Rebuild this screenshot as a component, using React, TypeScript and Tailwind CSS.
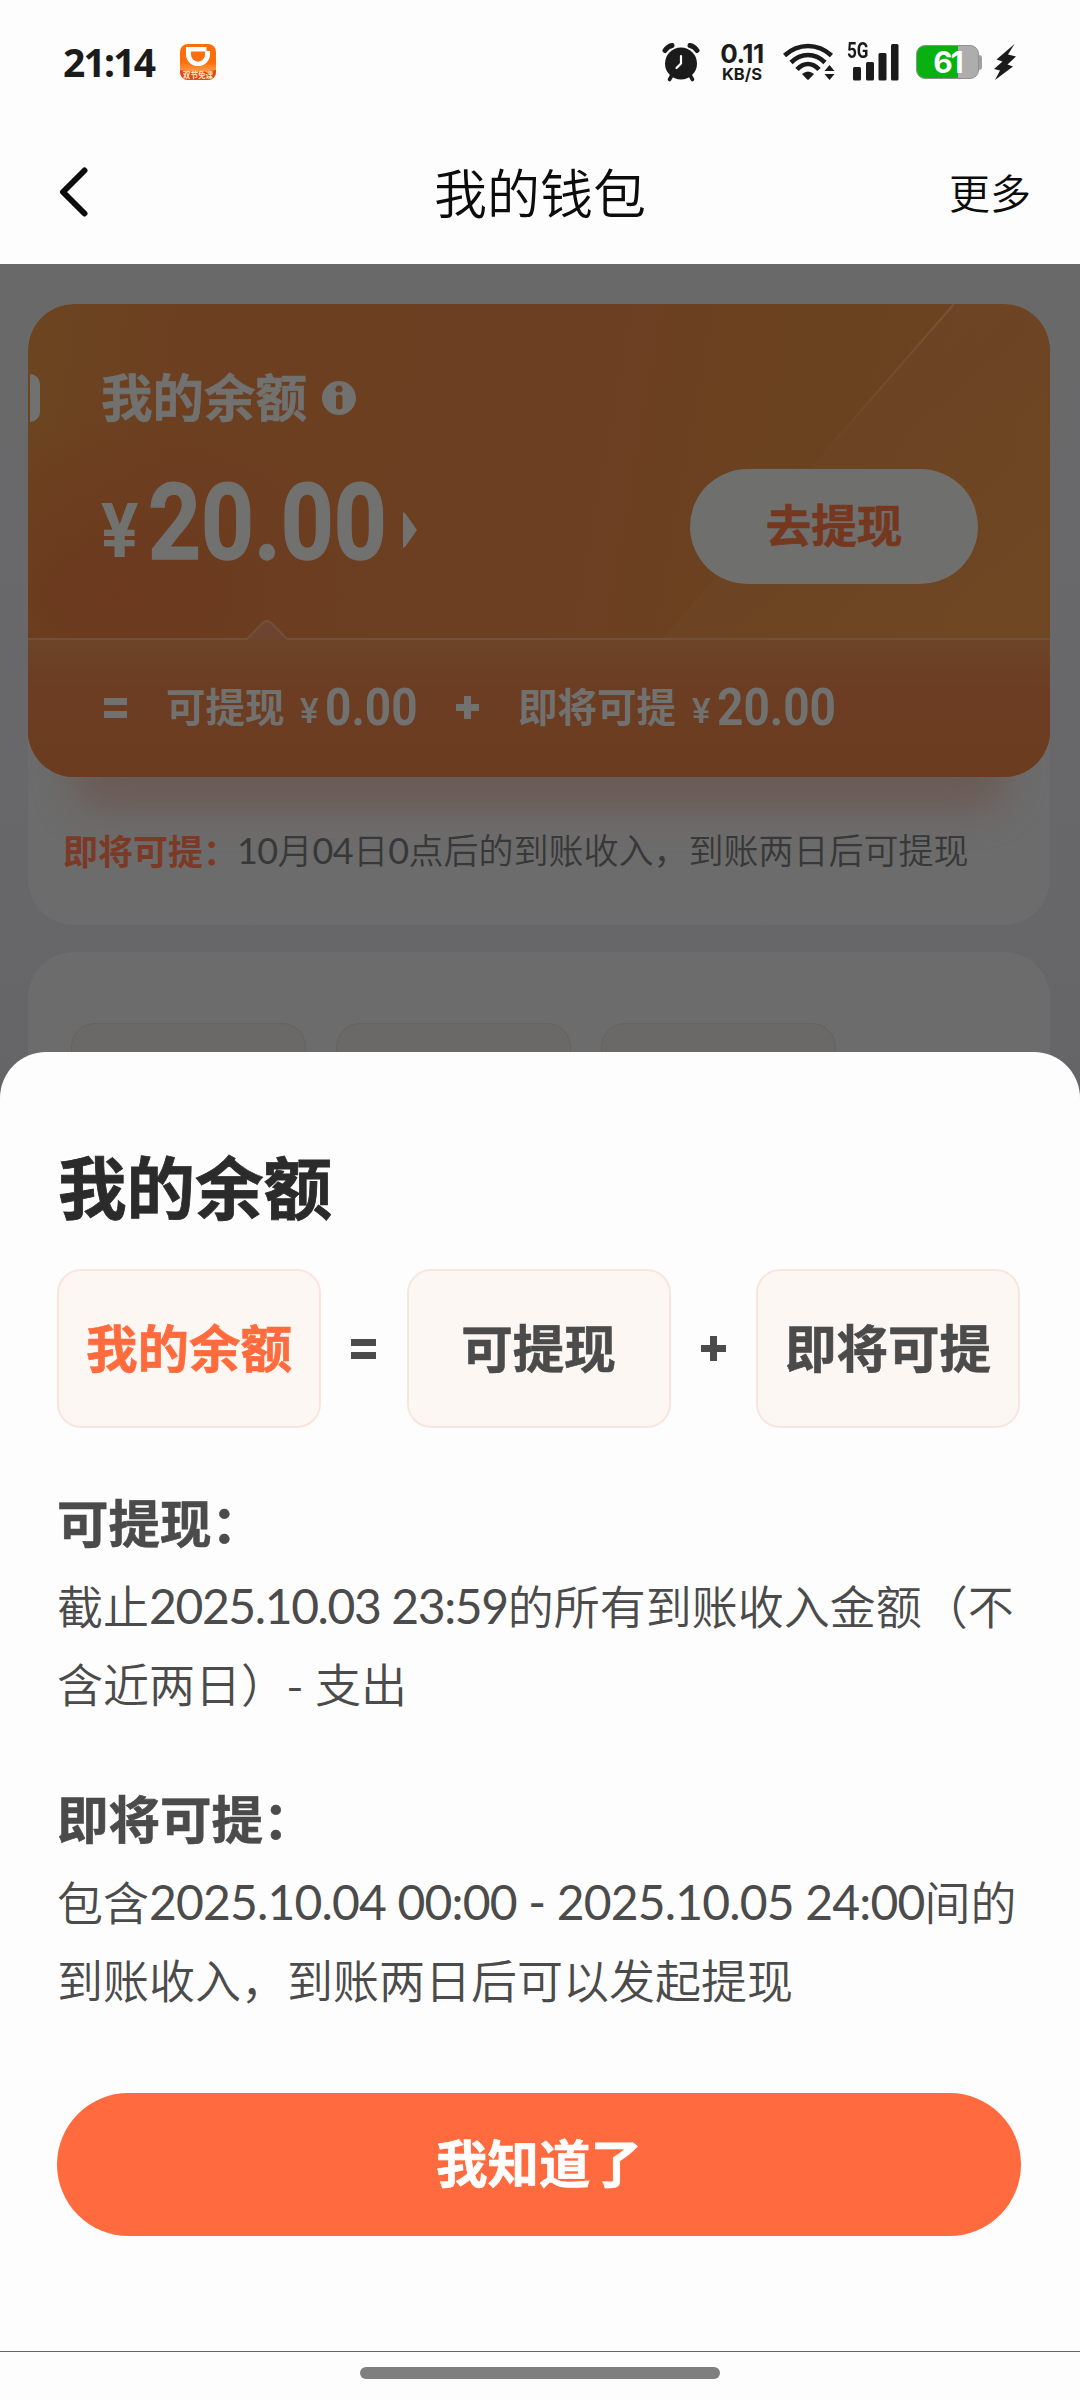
import type { ReactNode } from "react";

const CJK = "font-['Noto_Sans_CJK_SC',sans-serif]";

function AlarmIcon() {
  return (
    <svg width="38" height="39" viewBox="0 0 38 39" className="shrink-0">
      <path d="M3 7.500Q5.500 3.500 10 2.500" stroke="#1b1b1b" strokeWidth="5" strokeLinecap="round" fill="none" />
      <path d="M35 7.500Q32.500 3.500 28 2.500" stroke="#1b1b1b" strokeWidth="5" strokeLinecap="round" fill="none" />
      <circle cx="19" cy="20.500" r="16" fill="#1b1b1b" />
      <path d="M9.500 33L7.500 36.500M28.500 33L30.500 36.500" stroke="#1b1b1b" strokeWidth="3.600" strokeLinecap="round" />
      <path d="M19 13V20.500L14.500 25" stroke="#fff" strokeWidth="2.200" strokeLinecap="round" strokeLinejoin="round" fill="none" />
    </svg>
  );
}

function WifiIcon() {
  return (
    <svg width="52" height="38" viewBox="0 0 52 38" className="shrink-0">
      <g fill="none" stroke="#1b1b1b" strokeWidth="4.600">
        <path d="M1.500 12.500Q12 3 25 3T48.500 12.500" />
        <path d="M8 19.500Q15.500 12 25 12T42 19.500" />
        <path d="M14 26.500Q19 21 25 21T36 26.500" />
      </g>
      <path d="M19 31Q25 26 31 31L25.800 36.500Q25 37.200 24.200 36.500Z" fill="#1b1b1b" />
      <path d="M46.500 22L51.500 28H41.500ZM46.500 37L51.500 31H41.500Z" fill="#1b1b1b" />
    </svg>
  );
}

function SignalIcon() {
  return (
    <div className="relative h-[38px] w-[52px] shrink-0">
      <span className="absolute -top-[3px] left-0 origin-left scale-x-[0.78] font-['Roboto',sans-serif] text-[22px] leading-[22px] font-bold text-[#1b1b1b]">5G</span>
      <svg width="52" height="38" viewBox="0 0 52 38">
        <g fill="#1b1b1b">
          <rect x="6" y="24" width="8" height="13.500" rx="1.500" />
          <rect x="19" y="19" width="8" height="18.500" rx="1.500" />
          <rect x="31.500" y="10" width="8" height="27.500" rx="1.500" />
          <rect x="44" y="1" width="7.500" height="36.500" rx="1.500" />
        </g>
      </svg>
    </div>
  );
}

function Battery() {
  return (
    <div className="flex shrink-0 items-center">
      <div className="relative flex h-[34px] w-[63px] items-center justify-center overflow-hidden rounded-[9px] border border-[#8f8f8f] bg-[#adadad]">
        <div className="absolute inset-y-0 left-0 w-[41px] bg-[#08b010]" />
        <span className="relative font-['Inter',sans-serif] text-[30px] leading-none font-bold tracking-[-2px] text-white">61</span>
      </div>
      <div className="h-[15px] w-[3px] rounded-r-[3px] bg-[#a0a0a0]" />
    </div>
  );
}

function AppBadge() {
  return (
    <svg width="36" height="36" viewBox="0 0 36 36" className="shrink-0">
      <defs>
        <clipPath id="badge"><rect width="36" height="36" rx="8" /></clipPath>
        <linearGradient id="bg" x1="0" y1="0" x2="0" y2="1">
          <stop offset="0" stopColor="#f56f10" />
          <stop offset="0.5" stopColor="#ff6d0c" />
          <stop offset="0.75" stopColor="#fb9a45" />
        </linearGradient>
      </defs>
      <g clipPath="url(#badge)">
        <rect width="36" height="36" fill="url(#bg)" />
        <path d="M0 26Q18 30 36 26V36H0Z" fill="#e4451c" />
        <path fillRule="evenodd" d="M6 3H26.500V7H30V10.500A12 11.500 0 0 1 6 10.500ZM11 7.500V10.500A7 7.200 0 0 0 25 10.500V7.500Z" fill="#fff" />
        <text x="18" y="33.500" textAnchor="middle" fontSize="7.600" fontWeight="700" fill="#ffe9b8" fontFamily="'Noto Sans CJK SC', sans-serif">双节免课</text>
      </g>
    </svg>
  );
}

function StatusBar() {
  return (
    <div className="flex h-[124px] items-center pr-[64px] pl-[63px]">
      <span className="w-[117px] pb-[2px] font-['Noto_Sans',sans-serif] text-[39px] leading-none font-bold tracking-[-1.8px] text-[#1b1b1b]">21:14</span>
      <AppBadge />
      <div className="ml-auto flex items-center">
        <AlarmIcon />
        <div className="ml-[18px] flex w-[48px] flex-col items-center gap-[4px] font-['Inter',sans-serif] text-[#1b1b1b]">
          <span className="h-[20px] text-[26px] leading-[20px] font-bold tracking-[-0.5px]">0.11</span>
          <span className="h-[12px] text-[16.500px] leading-[12px] font-bold">KB/S</span>
        </div>
        <div className="ml-[17px]"><WifiIcon /></div>
        <div className="ml-[12px]"><SignalIcon /></div>
        <div className="ml-[17px]"><Battery /></div>
        <svg width="22" height="36" viewBox="0 0 22 36" className="ml-[12px]">
          <path d="M20.500 0L2.500 15.500L8.500 17.500L0 25L6 26.500L1 36L19 22.500L13.500 20.500L22 12.500L14 10.500Z" fill="#1b1b1b" />
        </svg>
      </div>
    </div>
  );
}

function NavBar() {
  return (
    <div className="relative flex h-[140px] items-center justify-between pr-[49px] pb-[5px] pl-[59px] text-[#0c0c0c]">
      <svg width="30" height="50" viewBox="0 0 30 50">
        <path d="M25.500 3.500L4 25L25.500 46.500" fill="none" stroke="currentColor" strokeWidth="6" strokeLinecap="round" strokeLinejoin="round" />
      </svg>
      <h1 className="absolute inset-x-0 text-center text-[53px] leading-none font-[350]">我的钱包</h1>
      <span className="text-[41px] leading-none font-[350]">更多</span>
    </div>
  );
}

function Price({ yen, amount, className }: { yen: string; amount: string; className: string }) {
  return (
    <span className={"flex items-baseline font-['Roboto',sans-serif] font-bold " + className}>
      <span className="-translate-y-[2px] text-[35px] leading-none font-medium">{yen}</span>
      <span className="ml-[6px] origin-left scale-x-[0.885] text-[52px] leading-none">{amount}</span>
    </span>
  );
}

function BalanceCard() {
  return (
    <div className="relative z-10 h-[473px] overflow-hidden rounded-[46px] bg-[linear-gradient(100deg,#6c4520_0%,#6c3f20_15%,#6c3f22_50%,#6b421f_72%,#6d4423_100%)] text-[#717170]">
      <svg width="1022" height="335" viewBox="0 0 1022 335" className="absolute top-0 left-0">
        <defs>
          <linearGradient id="streak" x1="0" y1="0" x2="0" y2="1">
            <stop offset="0" stopColor="#79533a" />
            <stop offset="0.500" stopColor="#79533a" stopOpacity="0.500" />
            <stop offset="1" stopColor="#79533a" stopOpacity="0" />
          </linearGradient>
          <linearGradient id="pane" x1="0" y1="0" x2="1" y2="1">
            <stop offset="0" stopColor="#6e4428" stopOpacity="0.300" />
            <stop offset="1" stopColor="#6e4722" />
          </linearGradient>
          <radialGradient id="glow">
            <stop offset="0" stopColor="#6c391e" />
            <stop offset="1" stopColor="#6c391e" stopOpacity="0" />
          </radialGradient>
        </defs>
        <ellipse cx="90" cy="290" rx="260" ry="180" fill="url(#glow)" />
        <path d="M927 0H1022V335H634Z" fill="url(#pane)" />
        <path d="M926 0L782 165" stroke="url(#streak)" strokeWidth="2" />
      </svg>
      <div className="absolute top-[70px] left-0 h-[48px] w-[12px] rounded-r-[10px] border-l-2 border-[#6c4528] bg-[#717170]" />
      <div className="relative h-[334px] pr-[72px] pl-[73px]">
        <div className="flex items-center pt-[65px]">
          <span className="text-[51.500px] leading-[52px] font-bold [-webkit-text-stroke:0.6px]">我的余额</span>
          <span className="mt-[6px] ml-[15px] flex size-[34px] items-center justify-center rounded-full bg-[#717170]">
            <svg width="10" height="26" viewBox="0 0 10 26">
              <circle cx="5" cy="4" r="3.600" fill="#6c4022" />
              <rect x="2" y="9.500" width="6.500" height="15" rx="3" fill="#6c4022" />
            </svg>
          </span>
        </div>
        <div className="mt-[48px] flex h-[115px] items-center">
          <span className="-mt-[7px] flex w-[284px] items-baseline font-['Roboto',sans-serif] font-bold">
            <span className="origin-left -translate-y-[2px] scale-x-[0.92] text-[76px] leading-none">¥</span>
            <span className="ml-[6px] origin-left scale-x-[0.88] text-[105px] leading-none [-webkit-text-stroke:1.5px]">20.00</span>
          </span>
          <svg width="14" height="36" viewBox="0 0 14 36" className="mt-[6px] ml-[18px]">
            <path d="M0 0L2 1L14 18L2 35L0 36Z" fill="#717170" />
          </svg>
          <div className="ml-auto flex h-[115px] w-[288px] shrink-0 items-center justify-center rounded-full bg-[#6f6f6e] pb-[5px] text-[45.500px] leading-none font-bold text-[#76371f] [-webkit-text-stroke:0.6px]">
            去提现
          </div>
        </div>
      </div>
      <div className="relative flex h-[139px] items-center bg-[linear-gradient(180deg,#6c4529_0%,#6c3d22_35%,#6b3c20_100%)] pl-[76px]">
        <svg width="1022" height="20" viewBox="0 0 1022 20" className="absolute -top-[18px] left-0">
          <path d="M219 19L234.500 3Q239 -1 243.500 3L259 19Z" fill="#6c4430" />
          <path d="M0 19H219L234.500 3Q239 -1 243.500 3L259 19H1022" fill="none" stroke="#735038" strokeWidth="2" />
        </svg>
        <div className="flex flex-col gap-[6px]">
          <div className="h-[7px] w-[23px] bg-[#717170]" />
          <div className="h-[7px] w-[23px] bg-[#717170]" />
        </div>
        <span className="ml-[39px] w-[134px] pb-[5px] text-[39.500px] leading-none font-bold">可提现</span>
        <Price yen="¥" amount="0.00" className="w-[156px]" />
        <div className="relative h-[23px] w-[23px]">
          <div className="absolute inset-x-0 top-[8px] h-[7px] bg-[#717170]" />
          <div className="absolute inset-y-0 left-[8px] w-[7px] bg-[#717170]" />
        </div>
        <span className="ml-[39px] w-[174px] pb-[5px] text-[39.500px] leading-none font-bold">即将可提</span>
        <Price yen="¥" amount="20.00" className="" />
      </div>
    </div>
  );
}

function SmallDigits({ children }: { children: ReactNode }) {
  return <span className="font-['Lato',sans-serif] text-[36px] font-normal tracking-[-0.6px]">{children}</span>;
}

function DimmedPage() {
  return (
    <div className="flex h-[2088px] flex-col overflow-hidden bg-[linear-gradient(180deg,#69696a_0%,#68686a_25%,#656568_40%)] pt-[40px] pr-[30px] pl-[28px]">
      <div className="relative h-[621px] shrink-0 overflow-hidden rounded-[46px] bg-[#6c6c6c]">
        <div className="absolute inset-x-[45px] top-[430px] h-[75px] rounded-[30px] bg-[#6b5a54] blur-[18px]" />
        <BalanceCard />
        <div className="relative flex h-[148px] items-center pb-[3px] pl-[35px] text-[35px] leading-none whitespace-nowrap">
          <span className="w-[174px] shrink-0 font-bold text-[#7c3a26]">即将可提：</span>
          <span className="font-[350] text-[#383838]">
            <SmallDigits>10</SmallDigits>月<SmallDigits>04</SmallDigits>日<SmallDigits>0</SmallDigits>点后的到账收入，到账两日后可提现
          </span>
        </div>
      </div>
      <div className="mt-[27px] flex h-[400px] shrink-0 gap-[30px] rounded-[46px] bg-[#6c6c6c] px-[43px] pt-[71px]">
        <div className="h-[200px] w-[235px] rounded-[24px] border border-[#646361] bg-[#6a6967]" />
        <div className="h-[200px] w-[235px] rounded-[24px] border border-[#646361] bg-[#6a6967]" />
        <div className="h-[200px] w-[235px] rounded-[24px] border border-[#646361] bg-[#6a6967]" />
      </div>
    </div>
  );
}

function Tile({ children, className }: { children: ReactNode; className: string }) {
  return (
    <div className={"flex h-[159px] w-[264px] items-center justify-center rounded-[24px] border-2 border-[#f8e6de] bg-[#fdf7f3] pb-[6px] text-[51.500px] leading-none font-bold [-webkit-text-stroke:0.6px] " + className}>
      {children}
    </div>
  );
}

function Digits({ children, className = "" }: { children: ReactNode; className?: string }) {
  return <span className={"font-['Lato',sans-serif] text-[48px] font-normal " + className}>{children}</span>;
}

function Sheet() {
  return (
    <div className="absolute inset-x-0 top-[1052px] h-[1299px] rounded-t-[46px] bg-[#fdfdfd] pt-[99px] pr-[60px] pl-[57px] text-[#4b4b4b]">
      <h2 className="pl-px text-[68.500px] leading-[68px] font-bold text-[#2b2b2b] [-webkit-text-stroke:0.8px]">我的余额</h2>
      <div className="mt-[50px] flex items-center justify-between">
        <Tile className="text-[#ff6b3d]">我的余额</Tile>
        <div className="flex flex-col gap-[6px]">
          <div className="h-[7px] w-[25px] bg-[#4b4b4b]" />
          <div className="h-[7px] w-[25px] bg-[#4b4b4b]" />
        </div>
        <Tile className="">可提现</Tile>
        <div className="relative size-[25px]">
          <div className="absolute inset-x-0 top-[9px] h-[7px] bg-[#4b4b4b]" />
          <div className="absolute inset-y-0 left-[9px] w-[7px] bg-[#4b4b4b]" />
        </div>
        <Tile className="">即将可提</Tile>
      </div>
      <h3 className="mt-[67px] text-[51.500px] leading-[52px] font-bold [-webkit-text-stroke:0.6px]">可提现：</h3>
      <div className="mt-[18px] text-[46px] leading-[78.500px] font-[350] whitespace-nowrap">
        <p className="h-[78.500px]">截止<Digits className="tracking-[-1.4px]">2025.10.03 23:59</Digits>的所有到账收入金额（不</p>
        <p className="-mt-px h-[79.500px]">含近两日）<span className="tracking-[1px]">- </span>支出</p>
      </div>
      <h3 className="mt-[69px] text-[51.500px] leading-[52px] font-bold [-webkit-text-stroke:0.6px]">即将可提：</h3>
      <div className="mt-[18px] text-[46px] leading-[78.500px] font-[350] whitespace-nowrap">
        <p className="h-[78.500px]">包含<Digits className="tracking-[-0.83px]">2025.10.04 00:00 - 2025.10.05 24:00</Digits>间的</p>
        <p className="-mt-px h-[79.500px]">到账收入，到账两日后可以发起提现</p>
      </div>
      <button className="mt-[75px] flex h-[143px] w-[964px] items-center justify-center rounded-full bg-[#ff6b3f] pb-[7px] text-[51.500px] leading-none font-bold text-white [-webkit-text-stroke:0.6px]">
        我知道了
      </button>
    </div>
  );
}

export default function App() {
  return (
    <div className={"relative flex h-[2400px] w-[1080px] flex-col overflow-hidden bg-[#fdfdfd] " + CJK}>
      <StatusBar />
      <NavBar />
      <DimmedPage />
      <Sheet />
      <div className="flex h-[48px] flex-col items-center pt-[15px]">
        <div className="h-[12px] w-[360px] rounded-full bg-[#7f7f7f]" />
      </div>
    </div>
  );
}
